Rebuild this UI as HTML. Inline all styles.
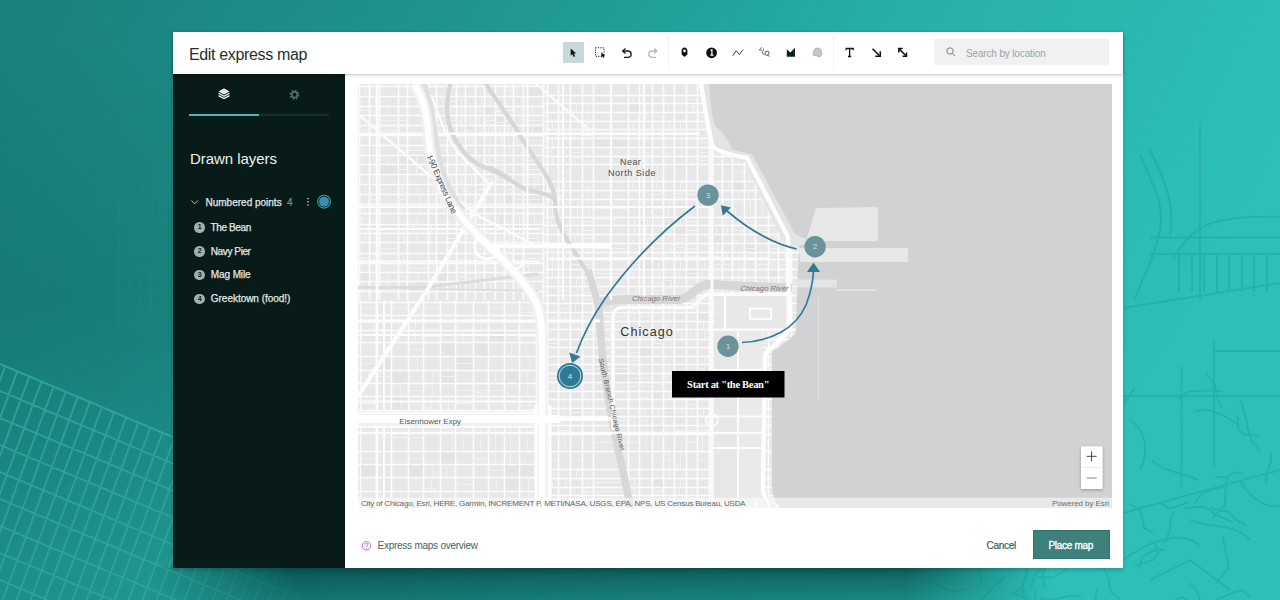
<!DOCTYPE html>
<html><head><meta charset="utf-8">
<style>
*{margin:0;padding:0;box-sizing:border-box}
html,body{width:1280px;height:600px;overflow:hidden}
body{position:relative;font-family:"Liberation Sans",sans-serif;background:linear-gradient(100deg,#1a7d79 0%,#20968f 40%,#29b6b0 75%,#2dc1ba 100%)}
.a{position:absolute;white-space:nowrap}
#bg{position:absolute;left:0;top:0;width:1280px;height:600px}
#dlg{position:absolute;left:173px;top:32px;width:950px;height:536px;background:#fff;box-shadow:0 2px 4px rgba(0,40,40,.25)}
#hdr{position:absolute;left:0;top:0;width:950px;height:42px;background:#fff;box-shadow:0 1px 3px rgba(0,0,0,.25);z-index:3}
#title{left:16px;top:15px;font-size:16px;line-height:16px;color:#24302f;letter-spacing:-0.35px}
#side{position:absolute;left:0;top:42px;width:172px;height:494px;background:#081b19;color:#e4eaea}
#map{position:absolute;left:185px;top:52px;width:754px;height:424px;background:#ececec;overflow:hidden}
#foot{position:absolute;left:172px;top:476px;width:778px;height:60px;background:#fff}
.sel{position:absolute;left:390px;top:10px;width:21px;height:21px;background:#c8d9db}
.sep{position:absolute;top:4px;width:1px;height:34px;background:#f0f2f2}
#search{position:absolute;left:761px;top:7px;width:175px;height:26px;background:#f1f1f1}
#search .t{left:32px;top:10px;font-size:10px;line-height:10px;color:#9ba3a3;letter-spacing:-0.15px}
.item{font-size:10px;line-height:10px;color:#e2e8e8;letter-spacing:0;-webkit-text-stroke:0.25px #e2e8e8}
.num{position:absolute;width:10.5px;height:10.5px;border-radius:50%;background:#9fb0af;color:#0a1a1a;font-size:7px;font-weight:700;text-align:center;line-height:10.5px}
</style></head><body><!--BG--><svg id="bg" width="1280" height="600" viewBox="0 0 1280 600"><defs><linearGradient id="g1" x1="0" y1="0" x2="1" y2="0.25"><stop offset="0" stop-color="#1a807b"/><stop offset="0.35" stop-color="#1f9590"/><stop offset="0.7" stop-color="#27b1aa"/><stop offset="1" stop-color="#2cc0b9"/></linearGradient><radialGradient id="g2" cx="0.05" cy="0.5" r="0.45"><stop offset="0" stop-color="#0f5f5c" stop-opacity="0.35"/><stop offset="1" stop-color="#0f5f5c" stop-opacity="0"/></radialGradient><clipPath id="c1"><path d="M0 364 L175 438 L300 500 L300 600 L0 600Z"/></clipPath></defs><rect width="1280" height="600" fill="url(#g1)"/><rect width="1280" height="600" fill="url(#g2)"/><g clip-path="url(#c1)"><path d="M-20 85.6 L320 228.4M-20 112.6 L320 255.4M-20 139.6 L320 282.4M-20 166.6 L320 309.4M-20 193.6 L320 336.4M-20 220.6 L320 363.4M-20 247.6 L320 390.4M-20 274.6 L320 417.4M-20 301.6 L320 444.4M-20 328.6 L320 471.4M-20 355.6 L320 498.4M-20 382.6 L320 525.4M-20 409.6 L320 552.4M-20 436.6 L320 579.4M-20 463.6 L320 606.4M-20 490.6 L320 633.4M-20 517.6 L320 660.4M-20 544.6 L320 687.4M-20 571.6 L320 714.4M-20 598.6 L320 741.4M-20 625.6 L320 768.4M-20 652.6 L320 795.4M-20 679.6 L320 822.4M-20 706.6 L320 849.4M-20 733.6 L320 876.4M-20 760.6 L320 903.4M-20 787.6 L320 930.4M-20 814.6 L320 957.4M-20 841.6 L320 984.4M-20 868.6 L320 1011.4M-60.0 202.0 L-220.0 634.0M-46.0 202.0 L-206.0 634.0M-32.0 202.0 L-192.0 634.0M-18.0 202.0 L-178.0 634.0M-4.0 202.0 L-164.0 634.0M10.0 202.0 L-150.0 634.0M24.0 202.0 L-136.0 634.0M38.0 202.0 L-122.0 634.0M52.0 202.0 L-108.0 634.0M66.0 202.0 L-94.0 634.0M80.0 202.0 L-80.0 634.0M94.0 202.0 L-66.0 634.0M108.0 202.0 L-52.0 634.0M122.0 202.0 L-38.0 634.0M136.0 202.0 L-24.0 634.0M150.0 202.0 L-10.0 634.0M164.0 202.0 L4.0 634.0M178.0 202.0 L18.0 634.0M192.0 202.0 L32.0 634.0M206.0 202.0 L46.0 634.0M220.0 202.0 L60.0 634.0M234.0 202.0 L74.0 634.0M248.0 202.0 L88.0 634.0M262.0 202.0 L102.0 634.0M276.0 202.0 L116.0 634.0M290.0 202.0 L130.0 634.0M304.0 202.0 L144.0 634.0M318.0 202.0 L158.0 634.0M332.0 202.0 L172.0 634.0M346.0 202.0 L186.0 634.0M360.0 202.0 L200.0 634.0M374.0 202.0 L214.0 634.0M388.0 202.0 L228.0 634.0M402.0 202.0 L242.0 634.0M416.0 202.0 L256.0 634.0M430.0 202.0 L270.0 634.0M444.0 202.0 L284.0 634.0M458.0 202.0 L298.0 634.0M472.0 202.0 L312.0 634.0M486.0 202.0 L326.0 634.0" stroke="#2ba59c" stroke-width="1.9" fill="none" opacity="0.9"/></g><path d="M0 364 L175 438" stroke="#2ba59c" stroke-width="2" opacity="0.9"/><path d="M120 170 L118 330M131 170 L129 330M142 170 L140 330M153 170 L151 330M164 170 L162 330M175 170 L173 330M100 200 L175 200M100 218 L175 218M100 236 L175 236M100 254 L175 254M100 272 L175 272M100 290 L175 290M100 308 L175 308M100 326 L175 326" stroke="#2a9a93" stroke-width="1.2" fill="none" opacity="0.18"/><path d="M1200 125 V300 M1173 258 C1185 240 1195 228 1215 222 C1240 216 1260 216 1280 217 M1150 237.5 H1280 M1150 254 H1280M1179 254 V292M1192 254 V292M1204 254 V292M1217 254 V292M1229 254 V292M1242 254 V292M1254 254 V292M1267 254 V292M1123 308 L1280 283 M1140 155 C1150 180 1165 200 1160 230 C1155 260 1140 280 1135 300 M1150 150 C1165 180 1175 205 1170 235M1214 340 V466 M1181.5 366 V487 M1123 396 H1280 M1214 351 H1280 M1123 513 L1280 470 M1123 560 C1150 540 1180 530 1200 545 M1240 480 C1250 500 1270 510 1280 505M1130 420 C1145 430 1150 450 1140 470 M1240 400 C1250 420 1245 440 1260 450 M1150 580 L1190 560 L1230 590 M1190 520 C1210 530 1230 520 1250 540M1195.1 503.1 L1200.9 494.7 L1213.4 489.0 L1223.4 486.8M1194.2 411.2 L1207.6 409.7 L1222.6 414.7 L1238.0 423.9M1134.8 387.8 L1128.3 397.8 L1121.3 405.4 L1118.3 416.6M1125.7 398.7 L1106.5 398.4 L1098.3 405.8 L1084.7 409.6M1129.6 503.9 L1140.4 510.4 L1144.1 528.2 L1153.4 533.0M1266.1 483.4 L1266.6 473.0 L1271.0 461.8 L1271.2 453.6M1188.6 583.0 L1195.5 588.3 L1199.3 597.7 L1203.0 610.5M1154.6 541.0 L1158.0 553.3 L1153.4 559.9 L1134.7 565.8M1216.9 599.5 L1233.5 592.1 L1242.6 590.5 L1250.6 597.5M1165.0 550.0 L1156.2 549.5 L1142.2 556.5 L1139.3 568.6M1221.4 408.0 L1216.6 396.3 L1214.7 384.7 L1205.4 372.6M1237.4 414.9 L1238.2 428.6 L1244.4 434.5 L1258.5 435.3M1164.6 542.8 L1170.3 528.7 L1170.4 518.6 L1173.9 510.5M1160.4 503.1 L1169.2 508.7 L1179.9 505.5 L1188.0 502.1M1152.3 461.1 L1163.4 468.6 L1179.5 473.4 L1197.9 479.6M1216.4 583.2 L1228.8 568.1 L1226.1 552.7 L1222.7 536.3M1174.4 599.9 L1182.6 597.5 L1197.3 605.8 L1216.7 602.7M1178.0 398.7 L1188.8 391.5 L1207.1 390.4 L1222.6 391.5M1184.3 508.2 L1204.1 506.5 L1217.9 515.9 L1233.4 522.5M1215.0 476.9 L1226.8 477.4 L1233.1 472.1 L1242.4 473.2M1245.9 525.2 L1235.7 519.7 L1228.5 512.1 L1210.1 508.0M1227.3 477.2 L1225.7 487.5 L1225.0 505.1 L1212.0 518.3" stroke="#1f9c95" stroke-width="1.8" fill="none" opacity="0.4"/><path d="M1022.7 588.3 L1024.8 601.1 L1018.8 616.5 L1007.3 629.7M1005.1 576.7 L997.2 583.0 L987.3 593.4 L979.7 601.5M1096.8 599.5 L1092.1 606.4 L1084.3 609.6 L1070.7 610.2M1010.4 594.2 L1021.6 588.6 L1027.2 573.2 L1026.5 563.9M967.7 589.6 L953.2 591.5 L936.8 585.3 L928.9 579.2M1037.4 577.0 L1052.6 577.4 L1062.0 572.3 L1073.1 562.2M1044.8 589.2 L1042.7 573.4 L1047.1 565.7 L1061.3 560.3M981.2 584.7 L979.7 573.0 L979.4 556.2 L987.1 540.6M1035.6 590.2 L1034.4 606.4 L1030.0 620.9 L1032.7 637.7M1119.8 599.4 L1111.2 592.2 L1107.6 576.0 L1103.7 568.1M1031.9 587.4 L1032.6 579.2 L1037.4 572.0 L1045.9 567.3M1014.6 594.1 L1027.1 598.2 L1039.9 608.5 L1049.6 623.0M1040.3 598.6 L1053.5 599.8 L1068.3 596.2 L1081.6 595.9M1097.5 587.7 L1094.3 603.8 L1086.8 610.6 L1069.4 613.6" stroke="#1f9c95" stroke-width="1.8" fill="none" opacity="0.35"/></svg><!--/BG--><div id="shd" style="position:absolute;left:150px;top:566px;width:900px;height:34px;background:linear-gradient(to bottom,rgba(0,50,46,.72),rgba(0,50,46,.55) 40%,rgba(0,50,46,.38));-webkit-mask-image:linear-gradient(to right,transparent 0,#000 16%,#000 84%,transparent 100%)"></div>
<div id="dlg">
  <div id="hdr">
    <div id="title" class="a">Edit express map</div>
    <div class="sel"></div>
    <svg class="a" style="left:380px;top:0" width="360" height="42" viewBox="380 0 360 42">
      <!-- select cursor -->
      <path d="M397.7 16.6 L397.7 23.8 L399.4 22.2 L400.8 25 L402.2 24.3 L400.8 21.6 L403.2 21.4 Z" fill="#111"/>
      <!-- marquee -->
      <rect x="422.5" y="15.8" width="8.5" height="8.5" fill="none" stroke="#222" stroke-width="1" stroke-dasharray="1.2 1.2"/>
      <path d="M428.3 20.3 L428.3 25.4 L429.5 24.3 L430.4 26 L431.3 25.6 L430.4 23.9 L432 23.8 Z" fill="#111"/>
      <!-- undo -->
      <path d="M450.5 19 H455.5 A3.2 3.2 0 0 1 455.5 25.3 H451" fill="none" stroke="#1c1c1c" stroke-width="1.3"/>
      <path d="M452.5 16.4 L449.6 19 L452.5 21.6" fill="none" stroke="#1c1c1c" stroke-width="1.3"/>
      <!-- redo -->
      <path d="M483 19 H478.5 A3.2 3.2 0 0 0 478.5 25.3 H483" fill="none" stroke="#b4b8b8" stroke-width="1.3"/>
      <path d="M481 16.4 L483.9 19 L481 21.6" fill="none" stroke="#b4b8b8" stroke-width="1.3"/>
      <!-- pin -->
      <path d="M511.5 15.5 C509.7 15.5 508.6 16.9 508.6 18.6 L508.6 22.6 L511.5 25 L514.4 22.6 L514.4 18.6 C514.4 16.9 513.3 15.5 511.5 15.5 Z" fill="#111"/>
      <circle cx="511.5" cy="18.9" r="1.3" fill="#fff"/>
      <!-- numbered -->
      <circle cx="538.6" cy="20.8" r="5.4" fill="#111"/>
      <path d="M537.6 18.6 L538.9 17.8 L538.9 23.2 M537.3 23.2 H540.5" stroke="#fff" stroke-width="1.2" fill="none"/>
      <!-- line -->
      <path d="M559.7 23.8 L563.2 18.8 L566.4 22.6 L570 17.6" fill="none" stroke="#222" stroke-width="0.9"/>
      <!-- freehand -->
      <path d="M588.9 15.3 C588 16.3 587 17 586.3 17.9 L588.7 18.1 M590.3 16.6 C591.6 17.6 589.2 19.5 589.3 20.6 C589.5 21.6 590.6 22.4 591.5 22.9" fill="none" stroke="#333" stroke-width="0.8"/><circle cx="594" cy="21.2" r="2.1" fill="none" stroke="#333" stroke-width="0.8"/><path d="M594.6 23 L596.2 24.6" stroke="#333" stroke-width="0.8"/>
      <!-- polygon -->
      <path d="M613.8 17.2 L617.4 20.4 L622 15.8 L622 24.7 L613.8 24.7 Z" fill="#0e2222"/>
      <!-- blob -->
      <path d="M644.5 16 C647.3 16 648.8 19 648.7 21.5 C648.6 23.6 647.6 24.6 646 24.5 C644.8 24.4 644 23.6 642.8 23.6 C641.4 23.7 640 23.4 640.1 21.9 C640.2 20.8 640.6 20.3 640.9 19.2 C641.3 17.5 642.5 16 644.5 16 Z" fill="#c5c9c5" stroke="#8f948f" stroke-width="0.7"/>
      <!-- T -->
      <path d="M673 16.5 H680.2 V18.2 M673 16.5 V18.2 M676.6 16.5 V24.5 M675 24.5 H678.2" fill="none" stroke="#111" stroke-width="1.3"/>
      <!-- arrow -->
      <path d="M699.5 16.8 L706.5 23.6" stroke="#111" stroke-width="1.5"/>
      <path d="M707.3 19.3 V24.3 H702.3" fill="none" stroke="#111" stroke-width="1.5"/>
      <!-- double arrow -->
      <path d="M726.3 17.1 L733 23.8" stroke="#111" stroke-width="1.5"/>
      <path d="M725.8 20.5 V16.6 H729.7" fill="none" stroke="#111" stroke-width="1.5"/>
      <path d="M733.5 20.4 V24.3 H729.6" fill="none" stroke="#111" stroke-width="1.5"/>
    </svg>
    <div class="sep" style="left:495px"></div>
    <div class="sep" style="left:660px"></div>
    <div id="search">
      <svg class="a" style="left:12px;top:8px" width="10" height="10"><circle cx="4" cy="4" r="3.2" fill="none" stroke="#6c8b8b" stroke-width="1"/><path d="M6.3 6.3 L9 9" stroke="#6c8b8b" stroke-width="1"/></svg>
      <div class="t a">Search by location</div>
    </div>
  </div>
  <div id="side">
    <svg class="a" style="left:0;top:0" width="172" height="90">
      <!-- layers icon -->
      <path d="M51 14.5 L56.5 17.5 L51 20.5 L45.5 17.5 Z" fill="#f2f5f5"/>
      <path d="M45.5 19.3 L51 22.3 L56.5 19.3" fill="none" stroke="#f2f5f5" stroke-width="1.3"/>
      <path d="M45.5 21.6 L51 24.6 L56.5 21.6" fill="none" stroke="#f2f5f5" stroke-width="1.3"/>
      <!-- gear -->
      <g transform="translate(121.5 52.7)"><circle cx="0" cy="-32" r="3.9" fill="none" stroke="#4f6e6e" stroke-width="2.2" stroke-dasharray="1.6 1.45"/><circle cx="0" cy="-32" r="2.8" fill="none" stroke="#4f6e6e" stroke-width="1.6"/></g>
      <rect x="16" y="40" width="70" height="2" fill="#4fb3ae"/>
      <rect x="86" y="40.5" width="70" height="1" fill="#1f4444"/>
    </svg>
    <div class="a" style="left:17px;top:76.8px;font-size:15px;line-height:15px;color:#eef2f2;letter-spacing:-0.05px">Drawn layers</div>
    <svg class="a" style="left:0;top:118px" width="172" height="20">
      <path d="M18.4 8.5 L21.65 11.8 L24.9 8.5" fill="none" stroke="#c9d2d2" stroke-width="0.9"/>
      <circle cx="135" cy="6.6" r="0.8" fill="#c9d2d2"/><circle cx="135" cy="9.8" r="0.8" fill="#c9d2d2"/><circle cx="135" cy="13" r="0.8" fill="#c9d2d2"/>
      <circle cx="151.1" cy="9.7" r="6.4" fill="none" stroke="#39a5a3" stroke-width="1.1"/>
      <circle cx="151.1" cy="9.7" r="5" fill="#3b8db4"/>
    </svg>
    <div class="a item" style="left:32.5px;top:123.6px">Numbered points</div>
    <div class="a item" style="left:114px;top:123.6px;color:#7f8e8e;-webkit-text-stroke:0.2px #7f8e8e">4</div>
    <div class="num" style="left:21.35px;top:148.25px">1</div>
    <div class="num" style="left:21.35px;top:172.05px">2</div>
    <div class="num" style="left:21.35px;top:195.85px">3</div>
    <div class="num" style="left:21.35px;top:219.65px">4</div>
    <div class="a item" style="left:37.5px;top:148.7px;letter-spacing:-0.38px">The Bean</div>
    <div class="a item" style="left:37.8px;top:172.5px;letter-spacing:-0.4px">Navy Pier</div>
    <div class="a item" style="left:37.8px;top:196.3px;letter-spacing:-0.1px">Mag Mile</div>
    <div class="a item" style="left:37.8px;top:220.1px;letter-spacing:-0.03px">Greektown (food!)</div>
  </div>
  <div id="map"><!--MAP--><svg width="754" height="424" viewBox="358 84 754 424" style="position:absolute;left:0;top:0" shape-rendering="auto">
<rect x="358" y="84" width="754" height="424" fill="#e8e8e8"/>
<path d="M359.5 84V300M369.5 84V300M379.5 84V300M398.5 84V300M407.5 84V300M428.5 84V300M436.5 84V300M447.5 84V300M456.5 84V300M465.5 84V300M475.5 84V300M484.5 84V300M495.5 84V300M504.5 84V300M513.5 84V300M523.5 84V300M543.5 84V300M358 86.5H545M358 96.5H545M358 106.5H545M358 115.5H545M358 125.5H545M358 135.5H545M358 145.5H545M358 155.5H545M358 164.5H545M358 174.5H545M358 184.5H545M358 194.5H545M358 204.5H545M358 213.5H545M358 224.5H545M358 233.5H545M358 242.5H545M358 253.5H545M358 263.5H545M358 272.5H545M358 281.5H545M358 291.5H545" stroke="#fcfcfc" stroke-width="1.6" fill="none"/>
<path d="M360.5 273.5H368.5V280.5H360.5ZM370.5 146.5H378.5V154.5H370.5ZM380.5 165.5H397.5V173.5H380.5ZM399.5 156.5H406.5V163.5H399.5ZM399.5 165.5H406.5V173.5H399.5ZM408.5 156.5H427.5V163.5H408.5ZM408.5 282.5H427.5V290.5H408.5ZM437.5 156.5H446.5V163.5H437.5ZM437.5 254.5H446.5V262.5H437.5ZM437.5 273.5H446.5V280.5H437.5ZM448.5 234.5H455.5V241.5H448.5ZM457.5 282.5H464.5V290.5H457.5ZM466.5 126.5H474.5V134.5H466.5ZM485.5 107.5H494.5V114.5H485.5ZM485.5 243.5H494.5V252.5H485.5ZM496.5 116.5H503.5V124.5H496.5ZM496.5 214.5H503.5V223.5H496.5ZM505.5 136.5H512.5V144.5H505.5ZM505.5 195.5H512.5V203.5H505.5ZM514.5 225.5H522.5V232.5H514.5ZM524.5 87.5H542.5V95.5H524.5ZM524.5 126.5H542.5V134.5H524.5ZM524.5 156.5H542.5V163.5H524.5ZM524.5 185.5H542.5V193.5H524.5ZM524.5 195.5H542.5V203.5H524.5Z" fill="#e3e4e3"/>
<path d="M365.5 86V96M359 101.5H369M359 110.5H369M359 130.5H369M363.5 145V155M363.5 155V164M365.5 184V194M364.5 204V213M359 207.5H361.5V213M359 218.5H369M359 216.5H361.5V224M359 228.5H369M359 229.5H366.5V233M364.5 233V242M359 258.5H369M359 257.5H362.5V263M359 289.5H364.5V291M375.5 96V106M369 110.5H379M373.5 145V155M373.5 174V184M369 199.5H379M374.5 204V213M373.5 253V263M375.5 263V272M369 276.5H379M375.5 281V291M388.5 106V115M379 120.5H398M379 130.5H398M388.5 155V164M389.5 194V204M379 248.5H398M387.5 272V281M387.5 281V291M398 120.5H407M398 150.5H407M398 169.5H407M404.5 174V184M402.5 184V194M398 188.5H404.5V194M398 199.5H407M401.5 204V213M398 220.5H400.5V224M404.5 224V233M404.5 233V242M398 237.5H404.5V242M403.5 253V263M401.5 263V272M398 276.5H407M417.5 86V96M407 91.5H421.5V96M407 101.5H428M407 150.5H428M416.5 155V164M416.5 164V174M417.5 184V194M419.5 194V204M419.5 204V213M417.5 213V224M418.5 224V233M407 226.5H413.5V233M416.5 233V242M407 268.5H428M418.5 272V281M431.5 125V135M433.5 135V145M433.5 155V164M433.5 184V194M428 208.5H436M431.5 224V233M428 236.5H430.5V242M433.5 263V272M428 278.5H432.5V281M428 286.5H436M442.5 96V106M436 130.5H447M436 130.5H438.5V135M436 140.5H447M436 150.5H447M441.5 174V184M440.5 194V204M443.5 204V213M436 286.5H447M447 101.5H456M450.5 106V115M447 120.5H456M450.5 135V145M451.5 145V155M451.5 174V184M451.5 194V204M447 208.5H456M447 220.5H449.5V224M447 228.5H456M447 238.5H456M450.5 253V263M452.5 281V291M461.5 96V106M461.5 106V115M461.5 115V125M456 120.5H460.5V125M460.5 135V145M456 150.5H465M456 151.5H460.5V155M461.5 155V164M460.5 164V174M461.5 174V184M462.5 184V194M460.5 194V204M460.5 213V224M460.5 224V233M459.5 233V242M456 239.5H460.5V242M456 258.5H465M456 267.5H461.5V272M456 276.5H465M460.5 281V291M470.5 106V115M470.5 115V125M465 130.5H475M469.5 135V145M465 139.5H473.5V145M471.5 174V184M465 189.5H468.5V194M465 208.5H475M471.5 213V224M465 238.5H475M469.5 242V253M469.5 253V263M469.5 272V281M465 278.5H470.5V281M470.5 281V291M481.5 96V106M475 110.5H484M479.5 115V125M479.5 155V164M475 167.5H478.5V174M475 189.5H484M480.5 194V204M475 218.5H484M480.5 224V233M479.5 233V242M475 248.5H484M475 257.5H478.5V263M475 268.5H478.5V272M479.5 272V281M490.5 96V106M484 120.5H495M488.5 125V135M484 139.5H490.5V145M489.5 145V155M489.5 155V164M488.5 164V174M484 179.5H495M484 178.5H492.5V184M489.5 213V224M489.5 224V233M490.5 233V242M484 268.5H495M490.5 281V291M499.5 96V106M495 110.5H504M495 111.5H499.5V115M495 122.5H501.5V125M500.5 125V135M501.5 135V145M495 160.5H504M500.5 164V174M495 179.5H504M500.5 194V204M500.5 204V213M498.5 213V224M500.5 233V242M501.5 272V281M504 90.5H510.5V96M504 110.5H513M504 109.5H506.5V115M504 120.5H513M508.5 125V135M508.5 135V145M509.5 145V155M509.5 174V184M504 189.5H513M509.5 224V233M509.5 233V242M504 240.5H509.5V242M509.5 242V253M504 268.5H513M504 269.5H510.5V272M510.5 272V281M517.5 86V96M513 92.5H517.5V96M517.5 135V145M513 199.5H523M513 208.5H523M519.5 213V224M519.5 224V233M517.5 233V242M517.5 281V291M532.5 106V115M523 120.5H543M532.5 125V135M523 140.5H543M523 160.5H543M523 169.5H543M534.5 174V184M523 177.5H538.5V184M534.5 184V194M523 199.5H543M533.5 204V213M534.5 213V224M523 238.5H538.5V242M523 258.5H543M523 266.5H528.5V272M533.5 281V291" stroke="#f3f3f3" stroke-width="0.9" fill="none"/>
<path d="M360.5 300V508M376.5 300V508M391.5 300V508M408.5 300V508M423.5 300V508M440.5 300V508M455.5 300V508M473.5 300V508M488.5 300V508M504.5 300V508M519.5 300V508M536.5 300V508M358 302.5H545M358 315.5H545M358 330.5H545M358 342.5H545M358 356.5H545M358 370.5H545M358 383.5H545M358 396.5H545M358 410.5H545M358 423.5H545M358 451.5H545M358 464.5H545M358 477.5H545M358 491.5H545M358 505.5H545" stroke="#fcfcfc" stroke-width="1.6" fill="none"/>
<path d="M361.5 465.5H375.5V476.5H361.5ZM377.5 357.5H390.5V369.5H377.5ZM392.5 371.5H407.5V382.5H392.5ZM392.5 397.5H407.5V409.5H392.5ZM409.5 411.5H422.5V422.5H409.5ZM409.5 465.5H422.5V476.5H409.5ZM441.5 343.5H454.5V355.5H441.5ZM441.5 371.5H454.5V382.5H441.5ZM441.5 452.5H454.5V463.5H441.5ZM456.5 357.5H472.5V369.5H456.5ZM474.5 343.5H487.5V355.5H474.5ZM489.5 331.5H503.5V341.5H489.5ZM505.5 371.5H518.5V382.5H505.5ZM505.5 465.5H518.5V476.5H505.5ZM505.5 478.5H518.5V490.5H505.5ZM520.5 465.5H535.5V476.5H520.5Z" fill="#e3e4e3"/>
<path d="M360 308.5H376M360 322.5H376M360 363.5H376M368.5 370V383M360 403.5H376M360 458.5H376M384.5 330V342M385.5 342V356M383.5 356V370M376 362.5H383.5V370M376 376.5H391M384.5 396V410M384.5 410V423M376 437.5H391M384.5 477V491M376 498.5H391M391 308.5H408M398.5 315V330M399.5 330V342M400.5 383V396M401.5 396V410M398.5 410V423M391 437.5H408M400.5 491V505M408 308.5H423M415.5 315V330M415.5 330V342M408 349.5H423M417.5 356V370M408 390.5H423M408 437.5H423M408 458.5H423M423 308.5H440M423 336.5H440M432.5 370V383M432.5 383V396M431.5 396V410M423 407.5H427.5V410M432.5 464V477M431.5 477V491M423 488.5H435.5V491M423 498.5H440M440 322.5H455M440 352.5H443.5V356M440 376.5H455M448.5 396V410M446.5 410V423M440 428.5H452.5V451M446.5 464V477M455 324.5H457.5V330M463.5 330V342M455 363.5H473M455 390.5H473M455 403.5H473M463.5 423V451M455 484.5H473M455 498.5H473M480.5 315V330M473 390.5H488M473 392.5H481.5V396M480.5 423V451M473 458.5H488M473 460.5H484.5V464M480.5 491V505M488 308.5H504M495.5 370V383M488 390.5H504M495.5 423V451M495.5 451V464M488 470.5H504M496.5 477V491M504 322.5H519M511.5 342V356M504 392.5H508.5V396M510.5 423V451M510.5 451V464M519 308.5H536M519 312.5H533.5V315M519 322.5H536M519 336.5H536M526.5 342V356M529.5 356V370M527.5 370V383M527.5 383V396M529.5 396V410M519 405.5H533.5V410M519 416.5H536M527.5 423V451M519 461.5H525.5V464M528.5 477V491M528.5 491V505" stroke="#f3f3f3" stroke-width="0.9" fill="none"/>
<path d="M547.5 84V508M558.5 84V508M570.5 84V508M582.5 84V508M593.5 84V508M628.5 84V508M639.5 84V508M652.5 84V508M663.5 84V508M674.5 84V508M686.5 84V508M697.5 84V508M709.5 84V508M722.5 84V508M732.5 84V508M744.5 84V508M755.5 84V508M768.5 84V508M778.5 84V508M791.5 84V508M545 95.5H800M545 103.5H800M545 112.5H800M545 121.5H800M545 129.5H800M545 138.5H800M545 147.5H800M545 156.5H800M545 164.5H800M545 181.5H800M545 190.5H800M545 199.5H800M545 217.5H800M545 225.5H800M545 234.5H800M545 243.5H800M545 252.5H800M545 259.5H800M545 269.5H800M545 277.5H800M545 286.5H800M545 295.5H800M545 303.5H800M545 312.5H800M545 321.5H800M545 329.5H800M545 339.5H800M545 347.5H800M545 356.5H800M545 364.5H800M545 373.5H800M545 382.5H800M545 391.5H800M545 399.5H800M545 408.5H800M545 416.5H800M545 425.5H800M545 434.5H800M545 451.5H800M545 469.5H800M545 478.5H800M545 487.5H800M545 495.5H800" stroke="#fcfcfc" stroke-width="1.6" fill="none"/>
<path d="M548.5 417.5H557.5V424.5H548.5ZM571.5 260.5H581.5V268.5H571.5ZM571.5 304.5H581.5V311.5H571.5ZM571.5 365.5H581.5V372.5H571.5ZM571.5 409.5H581.5V415.5H571.5ZM594.5 139.5H627.5V146.5H594.5ZM594.5 304.5H627.5V311.5H594.5ZM594.5 365.5H627.5V372.5H594.5ZM594.5 374.5H627.5V381.5H594.5ZM629.5 104.5H638.5V111.5H629.5ZM629.5 374.5H638.5V381.5H629.5ZM640.5 218.5H651.5V224.5H640.5ZM640.5 253.5H651.5V258.5H640.5ZM640.5 260.5H651.5V268.5H640.5ZM640.5 348.5H651.5V355.5H640.5ZM653.5 260.5H662.5V268.5H653.5ZM653.5 392.5H662.5V398.5H653.5ZM653.5 426.5H662.5V433.5H653.5ZM653.5 479.5H662.5V486.5H653.5ZM664.5 218.5H673.5V224.5H664.5ZM664.5 278.5H673.5V285.5H664.5ZM664.5 409.5H673.5V415.5H664.5ZM675.5 226.5H685.5V233.5H675.5ZM687.5 270.5H696.5V276.5H687.5ZM698.5 313.5H708.5V320.5H698.5ZM710.5 122.5H721.5V128.5H710.5ZM710.5 226.5H721.5V233.5H710.5ZM710.5 235.5H721.5V242.5H710.5ZM710.5 426.5H721.5V433.5H710.5ZM723.5 330.5H731.5V338.5H723.5ZM733.5 182.5H743.5V189.5H733.5ZM733.5 313.5H743.5V320.5H733.5ZM733.5 383.5H743.5V390.5H733.5ZM745.5 130.5H754.5V137.5H745.5ZM745.5 139.5H754.5V146.5H745.5ZM745.5 244.5H754.5V251.5H745.5ZM745.5 392.5H754.5V398.5H745.5ZM756.5 235.5H767.5V242.5H756.5ZM769.5 270.5H777.5V276.5H769.5ZM779.5 313.5H790.5V320.5H779.5Z" fill="#e3e4e3"/>
<path d="M553.5 95V103M552.5 121V129M552.5 138V147M551.5 147V156M552.5 156V164M547 161.5H553.5V164M552.5 199V217M547 222.5H551.5V225M551.5 243V252M552.5 252V259M552.5 259V269M552.5 269V277M547 317.5H554.5V321M547 343.5H558M547 378.5H558M553.5 382V391M547 412.5H558M553.5 416V425M547 460.5H558M547 474.5H558M547 482.5H552.5V487M558 99.5H570M565.5 129V138M563.5 147V156M563.5 156V164M558 172.5H570M564.5 181V190M558 196.5H562.5V199M558 238.5H570M564.5 252V259M558 266.5H560.5V269M563.5 277V286M558 290.5H570M565.5 295V303M558 308.5H570M565.5 312V321M563.5 364V373M564.5 382V391M563.5 391V399M563.5 399V408M564.5 408V416M558 422.5H562.5V425M558 430.5H570M564.5 434V451M565.5 478V487M576.5 103V112M575.5 129V138M570 152.5H582M575.5 156V164M577.5 199V217M570 221.5H582M577.5 225V234M575.5 234V243M570 246.5H572.5V252M570 256.5H582M570 264.5H582M576.5 277V286M577.5 286V295M577.5 295V303M575.5 303V312M577.5 382V391M570 412.5H582M570 420.5H582M570 460.5H582M576.5 469V478M587.5 103V112M587.5 112V121M587.5 121V129M586.5 129V138M582 135.5H591.5V138M587.5 147V156M582 161.5H590.5V164M586.5 181V190M582 187.5H589.5V190M588.5 190V199M588.5 199V217M582 221.5H593M582 230.5H593M582 238.5H593M588.5 243V252M582 264.5H593M588.5 269V277M582 272.5H589.5V277M582 281.5H584.5V286M582 292.5H590.5V295M582 299.5H593M582 316.5H593M582 334.5H593M586.5 339V347M582 369.5H589.5V373M582 396.5H585.5V399M588.5 399V408M582 412.5H593M582 420.5H593M588.5 478V487M582 491.5H593M582 492.5H587.5V495M611.5 129V138M593 133.5H602.5V138M593 208.5H628M593 219.5H614.5V225M593 248.5H628M609.5 252V259M611.5 259V269M593 273.5H628M593 289.5H606.5V295M611.5 303V312M593 316.5H628M593 325.5H628M610.5 329V339M593 342.5H600.5V347M611.5 356V364M593 368.5H628M611.5 373V382M611.5 399V408M593 420.5H628M593 442.5H628M593 482.5H628M593 491.5H628M633.5 95V103M633.5 121V129M634.5 147V156M633.5 164V181M632.5 181V190M634.5 199V217M634.5 217V225M634.5 225V234M633.5 234V243M628 256.5H639M628 264.5H639M633.5 269V277M628 272.5H634.5V277M635.5 286V295M634.5 295V303M632.5 303V312M634.5 312V321M634.5 339V347M628 352.5H639M628 360.5H639M628 378.5H639M628 386.5H639M628 394.5H630.5V399M634.5 416V425M634.5 425V434M628 442.5H639M634.5 478V487M634.5 487V495M645.5 103V112M646.5 112V121M647.5 129V138M639 152.5H652M646.5 156V164M647.5 217V225M639 220.5H649.5V225M645.5 225V234M639 238.5H652M646.5 252V259M644.5 269V277M645.5 286V295M646.5 295V303M639 308.5H652M639 316.5H652M645.5 329V339M639 334.5H641.5V339M639 378.5H652M639 386.5H652M647.5 391V399M639 397.5H646.5V399M644.5 408V416M639 420.5H647.5V425M646.5 434V451M652 116.5H663M652 125.5H663M658.5 147V156M657.5 164V181M656.5 181V190M652 194.5H663M652 208.5H663M652 215.5H657.5V217M652 221.5H663M652 238.5H663M652 248.5H663M657.5 252V259M658.5 259V269M659.5 269V277M652 274.5H658.5V277M652 282.5H663M652 290.5H663M652 290.5H657.5V295M657.5 295V303M652 308.5H663M652 334.5H663M652 333.5H659.5V339M652 343.5H663M658.5 347V356M658.5 408V416M658.5 434V451M657.5 469V478M652 491.5H663M668.5 103V112M669.5 121V129M663 134.5H674M663 152.5H667.5V156M668.5 199V217M663 220.5H669.5V225M670.5 243V252M667.5 252V259M663 257.5H670.5V259M663 280.5H671.5V286M670.5 295V303M669.5 303V312M668.5 312V321M663 326.5H668.5V329M670.5 339V347M668.5 364V373M663 376.5H666.5V382M669.5 391V399M663 412.5H674M667.5 425V434M663 460.5H674M663 454.5H669.5V469M669.5 469V478M681.5 103V112M680.5 121V129M680.5 129V138M681.5 138V147M681.5 147V156M680.5 181V190M674 193.5H681.5V199M680.5 217V225M674 238.5H686M674 247.5H684.5V252M679.5 252V259M680.5 259V269M679.5 269V277M681.5 329V339M681.5 373V382M674 395.5H686M674 412.5H686M674 430.5H686M674 431.5H681.5V434M680.5 451V469M674 464.5H677.5V469M680.5 478V487M679.5 487V495M686 99.5H697M692.5 103V112M686 106.5H694.5V112M686 134.5H697M691.5 156V164M692.5 181V190M686 194.5H697M686 207.5H692.5V217M686 221.5H697M686 230.5H697M686 248.5H694.5V252M686 256.5H697M686 273.5H697M686 292.5H691.5V295M692.5 295V303M686 308.5H697M690.5 329V339M691.5 364V373M686 395.5H697M686 404.5H697M691.5 408V416M686 430.5H697M686 442.5H697M692.5 487V495M703.5 103V112M697 116.5H709M697 125.5H709M697 142.5H709M697 152.5H709M697 160.5H709M703.5 190V199M704.5 259V269M702.5 269V277M702.5 277V286M697 299.5H709M703.5 321V329M704.5 329V339M704.5 356V364M704.5 364V373M697 368.5H703.5V373M697 386.5H709M704.5 391V399M703.5 408V416M697 430.5H709M702.5 434V451M697 460.5H709M702.5 469V478M715.5 95V103M709 100.5H719.5V103M715.5 103V112M715.5 121V129M709 134.5H722M716.5 138V147M714.5 181V190M716.5 225V234M717.5 243V252M709 256.5H722M709 264.5H722M717.5 269V277M709 290.5H722M709 307.5H715.5V312M717.5 339V347M709 362.5H712.5V364M714.5 364V373M716.5 373V382M716.5 391V399M716.5 408V416M709 461.5H711.5V469M709 474.5H722M709 471.5H718.5V478M728.5 95V103M728.5 103V112M727.5 112V121M727.5 121V129M726.5 129V138M722 152.5H732M728.5 181V190M722 208.5H732M722 221.5H732M727.5 225V234M727.5 252V259M722 257.5H725.5V259M722 264.5H732M728.5 277V286M722 290.5H732M727.5 295V303M726.5 321V329M728.5 329V339M722 343.5H732M726.5 356V364M728.5 364V373M722 386.5H732M722 384.5H724.5V391M726.5 391V399M726.5 408V416M728.5 425V434M728.5 434V451M726.5 469V478M726.5 487V495M722 491.5H730.5V495M739.5 103V112M732 116.5H744M738.5 156V164M732 172.5H744M738.5 190V199M732 208.5H735.5V217M738.5 217V225M732 230.5H744M732 240.5H736.5V243M739.5 252V259M739.5 259V269M739.5 269V277M738.5 277V286M738.5 303V312M732 316.5H744M738.5 321V329M739.5 329V339M737.5 347V356M737.5 356V364M732 359.5H738.5V364M732 378.5H744M732 420.5H744M732 430.5H744M732 438.5H737.5V451M738.5 451V469M737.5 478V487M738.5 487V495M749.5 95V103M744 108.5H755M751.5 121V129M749.5 138V147M744 152.5H755M749.5 164V181M748.5 190V199M750.5 199V217M744 221.5H755M750.5 225V234M744 248.5H755M749.5 303V312M744 307.5H747.5V312M750.5 312V321M744 325.5H755M749.5 329V339M744 332.5H751.5V339M744 368.5H755M748.5 399V408M749.5 408V416M744 423.5H747.5V425M749.5 425V434M744 442.5H755M748.5 451V469M744 491.5H755M755 100.5H758.5V103M755 115.5H762.5V121M762.5 129V138M762.5 138V147M761.5 147V156M755 159.5H764.5V164M762.5 199V217M755 230.5H768M755 239.5H757.5V243M760.5 252V259M755 264.5H768M755 282.5H768M755 299.5H768M755 308.5H768M755 325.5H768M763.5 329V339M755 343.5H768M762.5 347V356M761.5 356V364M755 358.5H766.5V364M760.5 373V382M761.5 382V391M755 395.5H768M755 420.5H768M761.5 425V434M761.5 434V451M761.5 469V478M768 99.5H778M768 108.5H775.5V112M768 134.5H778M772.5 138V147M774.5 156V164M773.5 181V190M773.5 190V199M768 208.5H778M774.5 234V243M768 248.5H778M772.5 259V269M774.5 277V286M768 290.5H778M768 299.5H778M768 308.5H778M768 316.5H778M773.5 321V329M768 334.5H778M768 352.5H778M774.5 356V364M768 360.5H774.5V364M768 368.5H778M768 370.5H773.5V373M768 378.5H778M768 412.5H778M773.5 416V425M774.5 425V434M768 474.5H778M773.5 478V487M784.5 112V121M778 125.5H791M778 124.5H780.5V129M778 185.5H788.5V190M785.5 190V199M778 208.5H791M778 221.5H791M783.5 225V234M778 238.5H791M784.5 243V252M784.5 252V259M778 264.5H791M785.5 269V277M785.5 277V286M778 290.5H791M778 334.5H791M784.5 347V356M783.5 373V382M784.5 382V391M778 395.5H791M778 412.5H791M778 430.5H791M778 460.5H791M778 471.5H782.5V478M784.5 478V487M778 484.5H782.5V487" stroke="#f3f3f3" stroke-width="0.9" fill="none"/>
<path d="M358 287.5 L423 287.5 L538 274" stroke="#dcdcdc" stroke-width="3" fill="none"/>
<path d="M423 289 L538 291" stroke="#dedede" stroke-width="2" fill="none"/>
<rect x="711" y="331" width="52" height="170" fill="#e6e7e6"/>
<rect x="740" y="331" width="23" height="170" fill="#e9eae9"/>
<rect x="715" y="296" width="75" height="33" fill="#e7e8e7"/>
<path d="M712 329.5 H790 M712 370 H762 M712 416.5 H762 M712 448 H762 M738 331 V500 M725 296 V329 M750 308.5 H771 V319 H750 Z" stroke="#fcfcfc" stroke-width="2.2" fill="none"/>
<path d="M450 84 C446 100 446 120 452 133 C460 150 470 162 486 168 C500 172 515 184 526 189.5 C536 193 546 192 554 199" stroke="#d6d7d7" stroke-width="4.2" fill="none" stroke-linecap="round"/>
<path d="M486 84 C496 100 506 112 518 132 C528 150 545 170 551 185 C554 192 555 197 555 201" stroke="#d6d7d7" stroke-width="4.2" fill="none" stroke-linecap="round"/>
<path d="M490 168 C498 171 503 175 508 177.5" stroke="#d6d7d7" stroke-width="4.2" fill="none" stroke-linecap="round"/>
<path d="M555 200 C555 212 557 224 565 236 C572 248 581 262 589 275 C594 285 596 298 601 308" stroke="#d6d7d7" stroke-width="4.2" fill="none" stroke-linecap="round"/>
<path d="M596 304 C605 300 615 299.5 630 299.5 L680 299.5 C690 298 695 288 705 285 C712 283 720 286 740 286 L792 288" stroke="#d6d7d7" stroke-width="9" fill="none"/>
<path d="M599 304 C599 320 601 340 603 360 C606 390 612 420 616 440 C620 460 626 480 630 508" stroke="#d6d7d7" stroke-width="7.5" fill="none"/>
<path d="M588 270 C592 282 595 292 598 306" stroke="#d6d7d7" stroke-width="7" fill="none"/>
<path d="M358 114 L475 214 L538 247" stroke="#fcfcfc" stroke-width="2.2" fill="none"/>
<path d="M492 182 L426 292 L358 396" stroke="#fcfcfc" stroke-width="4.2" fill="none"/>
<path d="M358 133.8 H700" stroke="#fcfcfc" stroke-width="2.4" fill="none"/>
<path d="M358 207 H712" stroke="#fcfcfc" stroke-width="2.2" fill="none"/>
<path d="M358 229 H540" stroke="#fcfcfc" stroke-width="2.0" fill="none"/>
<path d="M358 261.5 H540" stroke="#fcfcfc" stroke-width="2.0" fill="none"/>
<path d="M358 321 H600" stroke="#fcfcfc" stroke-width="3.0" fill="none"/>
<path d="M358 335 H545" stroke="#fcfcfc" stroke-width="2.0" fill="none"/>
<path d="M358 401.5 H545" stroke="#fcfcfc" stroke-width="2.0" fill="none"/>
<path d="M358 433 H762" stroke="#fcfcfc" stroke-width="2.4" fill="none"/>
<path d="M550 258.5 H770" stroke="#fcfcfc" stroke-width="2.4" fill="none"/>
<path d="M377 84 V508" stroke="#fcfcfc" stroke-width="2.4" fill="none"/>
<path d="M384 300 V508" stroke="#fcfcfc" stroke-width="2.0" fill="none"/>
<path d="M527.5 84 V245" stroke="#fcfcfc" stroke-width="2.0" fill="none"/>
<path d="M563 84 V300" stroke="#fcfcfc" stroke-width="2.0" fill="none"/>
<path d="M611 84 V300" stroke="#fcfcfc" stroke-width="2.2" fill="none"/>
<path d="M644 84 V300" stroke="#fcfcfc" stroke-width="2.2" fill="none"/>
<path d="M712 90 V508" stroke="#fcfcfc" stroke-width="3.0" fill="none"/>
<path d="M738 350 V497" stroke="#fcfcfc" stroke-width="2.0" fill="none"/>
<path d="M720 448 H762" stroke="#fcfcfc" stroke-width="2.0" fill="none"/>
<path d="M536 84 L591 131" stroke="#fcfcfc" stroke-width="2.0" fill="none"/>
<path d="M613 430 V318 C613 311 616 307.5 624 307.5 L690 307.5 C697 306 700 296 708 294 L788 294.5" stroke="#fcfcfc" stroke-width="3.5" fill="none"/>
<path d="M424 84 C430 100 434 125 437 150 C440 170 450 195 463 210" stroke="#dfdfdf" stroke-width="6" fill="none"/>
<path d="M431 95 C437 110 442 125 445 131 C450 140 455 150 461 156 L490 185" stroke="#fcfcfc" stroke-width="2" fill="none"/>
<path d="M414 84 C422 96 427 110 428 133 C429 150 432 170 445 196 C455 210 470 228 490 247" stroke="#f1f1f1" stroke-width="11" fill="none"/>
<path d="M478 236 C500 256 520 275 535 300 C542 315 542 330 542 345 L542 508" stroke="#f1f1f1" stroke-width="11" fill="none"/>
<path d="M358 419 H545" stroke="#f1f1f1" stroke-width="16" fill="none"/>
<path d="M414 84 C422 96 427 110 428 133 C429 150 432 170 445 196 C455 210 470 228 490 247" stroke="#fefefe" stroke-width="6" fill="none"/>
<path d="M478 236 C500 256 520 275 535 300 C542 315 542 330 542 345 L542 508" stroke="#fefefe" stroke-width="6.5" fill="none"/>
<path d="M490 246 H612" stroke="#fefefe" stroke-width="4.5" fill="none"/>
<path d="M358 419 H560" stroke="#fefefe" stroke-width="8.0" fill="none"/>
<path d="M545 419 H612" stroke="#fefefe" stroke-width="4.0" fill="none"/>
<path d="M536 405 L536 508" stroke="#fefefe" stroke-width="3.0" fill="none"/>
<path d="M550 405 L550 508" stroke="#fefefe" stroke-width="3.0" fill="none"/>
<path d="M478 236 C470 248 478 262 492 258 C502 254 500 246 490 246 M505 258 C500 270 515 275 525 262" stroke="#fefefe" stroke-width="2.5" fill="none"/>
<path d="M358 413 H540 M358 427 H540" stroke="#fefefe" stroke-width="1.6" fill="none"/>
<circle cx="712" cy="420" r="6" fill="none" stroke="#fcfcfc" stroke-width="2"/>
<path d="M704 84 H1112 V508 H780 C774 500 772 492 772 485 L772 352 C780 346 790 340 796 333 L798 265 L800 248 L795 240 L788 237 L748 157 L735 152 C730 148 724 140 716 132 C712 126 710 110 708 84 Z" fill="#d1d2d4"/>
<path d="M701 84 L709 84 C711 105 712 118 715 126 C722 132 729 140 732 150 L752 154 L795 234 L806 239 L805 244 L790 248 L782 240 L745 162 L730 156 L712 147 C708 120 704 100 701 84Z" fill="#e2e5e2"/>
<path d="M816 208 L878 207 L878 241 L806 241 Z" fill="#e6e7e6"/>
<rect x="800" y="248" width="108" height="14" fill="#e8e8e8"/>
<path d="M797 279.5 H837 V287.5 H797Z" fill="#e3e4e3"/>
<path d="M837 290 H877" stroke="#e3e4e3" stroke-width="1.6"/>
<path d="M818.5 297 V400" stroke="#e2e3e3" stroke-width="1"/>
<path d="M701 84 C704 104 708 126 712 145 C716 152 736 156 747 158 L788 237 L789 328 C786 338 772 346 765 354 L763 490 C764 498 770 504 778 508" stroke="#fdfdfd" stroke-width="4.5" fill="none"/>
<path d="M766 360 V490 C768 500 774 505 780 508 L772 508 C768 500 766 494 766 490Z" fill="#e2e5e2"/>
<text x="620" y="164.5" font-family="Liberation Sans, sans-serif" font-size="9" fill="#4d4d4d" letter-spacing="0.45">Near</text>
<text x="608" y="175.5" font-family="Liberation Sans, sans-serif" font-size="9" fill="#4d4d4d" letter-spacing="0.55">North Side</text>
<text x="620.3" y="336" font-family="Liberation Sans, sans-serif" font-size="12.6" fill="#333" letter-spacing="1.05">Chicago</text>
<text x="632" y="301.2" font-family="Liberation Sans, sans-serif" font-size="7.6" font-style="italic" fill="#777" letter-spacing="0.05">Chicago River</text>
<text x="740.2" y="290.7" font-family="Liberation Sans, sans-serif" font-size="7.6" font-style="italic" fill="#777" letter-spacing="0.05">Chicago River</text>
<text x="399.3" y="424" font-family="Liberation Sans, sans-serif" font-size="8" fill="#555" letter-spacing="0">Eisenhower Expy</text>
<text transform="translate(427 157) rotate(66.4)" font-family="Liberation Sans, sans-serif" font-size="8.3" fill="#3d3d3d" letter-spacing="-0.3">I-90 Express Lane</text>
<text transform="translate(598.5 359) rotate(76.5)" font-family="Liberation Sans, sans-serif" font-size="7" fill="#5a5a5a" letter-spacing="0.25">South Branch Chicago River</text>
<path d="M742 342.5 C770 341 795 330 806 305 C811 292 813 282 813.5 271" stroke="#357a92" stroke-width="1.7" fill="none"/>
<path d="M813.5 262.5 L807 272 L820 272 Z" fill="#357a92"/>
<path d="M796.7 249 C775 244 758 234 745 225 C738 220 733 216 727 211" stroke="#357a92" stroke-width="1.7" fill="none"/>
<path d="M721 205.3 L722.7 215.8 L731 207.4 Z" fill="#357a92"/>
<path d="M695 206 C663 230 632 261 606 297 C593 316 583 335 576.5 353" stroke="#357a92" stroke-width="1.7" fill="none"/>
<path d="M572 363 L569.3 352.6 L580.7 356.4 Z" fill="#357a92"/>
<circle cx="728" cy="346.2" r="10.7" fill="#6b939c"/>
<text x="728" y="348.8" font-family="Liberation Sans, sans-serif" font-size="7.5" fill="#d3e0e3" text-anchor="middle">1</text>
<circle cx="815.1" cy="246.7" r="10.7" fill="#6b939c"/>
<text x="815.1" y="249.29999999999998" font-family="Liberation Sans, sans-serif" font-size="7.5" fill="#d3e0e3" text-anchor="middle">2</text>
<circle cx="708" cy="195.1" r="10.7" fill="#6b939c"/>
<text x="708" y="197.7" font-family="Liberation Sans, sans-serif" font-size="7.5" fill="#d3e0e3" text-anchor="middle">3</text>
<circle cx="570" cy="376" r="13" fill="#2e7a94"/>
<circle cx="570" cy="376" r="10.8" fill="none" stroke="#d6e6ea" stroke-width="0.9"/>
<text x="570" y="378.8" font-family="Liberation Sans, sans-serif" font-size="8" fill="#d6e6ea" text-anchor="middle">4</text>
<rect x="672" y="371" width="112.5" height="26.5" fill="#000"/>
<text x="687.1" y="387.9" font-family="Liberation Serif, serif" font-weight="bold" font-size="10.5" fill="#fff" letter-spacing="-0.3">Start at "the Bean"</text>
<rect x="358" y="497.7" width="754" height="10.3" fill="#ffffff" opacity="0.5"/>
<text x="361" y="505.7" font-family="Liberation Sans, sans-serif" font-size="8" fill="#5e6666" letter-spacing="-0.19">City of Chicago, Esri, HERE, Garmin, INCREMENT P, METI/NASA, USGS, EPA, NPS, US Census Bureau, USDA</text>
<text x="1109" y="505.7" font-family="Liberation Sans, sans-serif" font-size="8" fill="#6a7070" letter-spacing="-0.08" text-anchor="end">Powered by Esri</text>
<rect x="1081" y="446.3" width="21.7" height="42.7" fill="#fff" style="filter:drop-shadow(0 1px 1.5px rgba(0,0,0,.3))"/>
<path d="M1083 467.6 H1100.7" stroke="#e3e3e3" stroke-width="0.8"/>
<path d="M1086.6 456.3 H1096.6 M1091.6 451.3 V461.3" stroke="#3a4747" stroke-width="1"/>
<path d="M1086.6 478 H1096.6" stroke="#8e9b9b" stroke-width="1.2"/>
</svg><!--/MAP--></div>
  <div id="foot">
    <svg class="a" style="left:16px;top:64px" width="12" height="12"></svg>
    <svg class="a" style="left:0;top:0" width="778" height="60">
      <circle cx="21.4" cy="37.8" r="4.2" fill="none" stroke="#a566c4" stroke-width="0.9"/>
      <path d="M20 36.6 C20 35 22.8 35 22.8 36.6 C22.8 37.8 21.4 37.7 21.4 39.2" fill="none" stroke="#a566c4" stroke-width="0.9"/>
      <circle cx="21.4" cy="40.6" r="0.5" fill="#a566c4"/>
    </svg>
    <div class="a" style="left:32.5px;top:33px;font-size:10px;line-height:10px;color:#3f6462;letter-spacing:-0.25px">Express maps overview</div>
    <div class="a" style="left:641.5px;top:33px;font-size:10px;line-height:10px;color:#3c5a59;letter-spacing:-0.3px;-webkit-text-stroke:0.2px #3c5a59">Cancel</div>
    <div class="a" style="left:687.5px;top:22px;width:77px;height:28.5px;background:#3d807c;border:1px solid #33746f"></div>
    <div class="a" style="left:703.5px;top:33px;font-size:10px;line-height:10px;color:#fff;font-weight:400;letter-spacing:-0.3px;-webkit-text-stroke:0.35px #fff">Place map</div>
  </div>
</div>
</body></html>
